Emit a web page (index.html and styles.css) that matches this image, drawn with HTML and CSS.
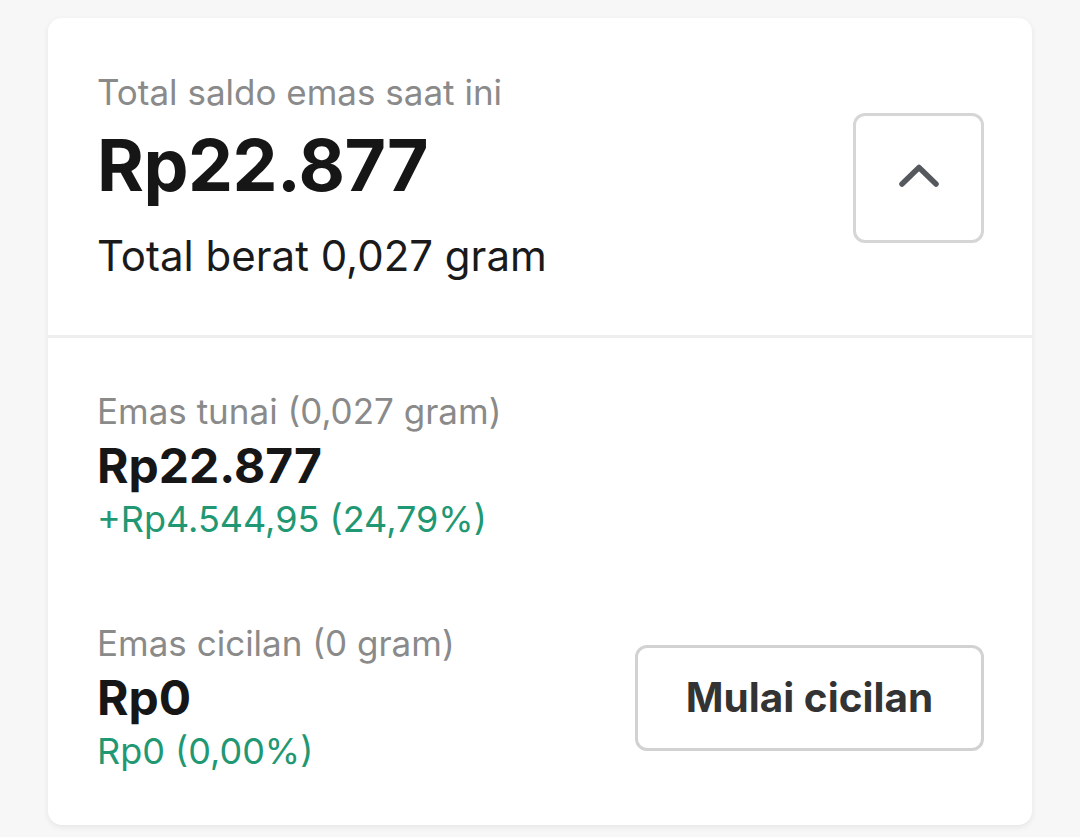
FILE: index.html
```html
<!DOCTYPE html>
<html>
<head>
<meta charset="utf-8">
<link rel="stylesheet" href="styles.css">
</head>
<body>
<div class="card">
  <section class="summary">
    <div class="summary-text">
      <div class="label">Total saldo emas saat ini</div>
      <div class="total">Rp22.877</div>
      <div class="weight">Total berat 0,027 gram</div>
    </div>
    <button class="toggle" aria-label="Tutup">
      <svg width="44" height="28" viewBox="0 0 44 28"><path d="M5 22 L22 5.5 L39 22" fill="none" stroke="#55585c" stroke-width="5.5" stroke-linecap="round" stroke-linejoin="round"/></svg>
    </button>
  </section>
  <section class="details">
    <div class="row first">
      <div class="item">
        <div class="label small">Emas tunai (0,027 gram)</div>
        <div class="amount">Rp22.877</div>
        <div class="gain">+Rp4.544,95 (24,79%)</div>
      </div>
    </div>
    <div class="row">
      <div class="item">
        <div class="label small">Emas cicilan (0 gram)</div>
        <div class="amount">Rp0</div>
        <div class="gain">Rp0 (0,00%)</div>
      </div>
      <button class="action">Mulai cicilan</button>
    </div>
  </section>
</div>
</body>
</html>
```
FILE: styles.css
```css
html, body {
  margin: 0;
  padding: 0;
  background: #f7f7f7;
  font-family: Inter, "Noto Sans", sans-serif;
}
body {
  padding: 18px 48px 12px 48px;
}
.card {
  background: #ffffff;
  border-radius: 14px;
  box-shadow: 0 2px 6px rgba(0,0,0,0.08);
  width: 984px;
  height: 807px;
  box-sizing: border-box;
  overflow: hidden;
}
.summary {
  display: flex;
  justify-content: space-between;
  align-items: flex-start;
  padding: 53px 48px 54px 49px;
  border-bottom: 3px solid #eeeeee;
}
.label {
  color: #8a8a8a;
  font-size: 35px;
  line-height: 42px;
}
.total {
  font-size: 71.5px;
  font-weight: 700;
  color: #161616;
  line-height: 80px;
  margin-top: 12px;
  letter-spacing: -0.5px;
}
.weight {
  font-size: 42px;
  color: #1a1a1a;
  line-height: 50px;
  margin-top: 26px;
}
.toggle {
  width: 131px;
  height: 130px;
  margin-top: 42px;
  border: 3px solid #d6d6d6;
  border-radius: 12px;
  background: #ffffff;
  display: flex;
  align-items: center;
  justify-content: center;
  padding: 0 0 4px 0;
}
.details {
  padding: 52px 48px 0 49px;
}
.row {
  display: flex;
  justify-content: space-between;
  align-items: center;
}
.row.first {
  margin-bottom: 81px;
}
.amount {
  font-size: 48px;
  font-weight: 700;
  color: #161616;
  line-height: 56px;
  margin-top: 6px;
}
.gain {
  font-size: 36px;
  color: #1f9873;
  line-height: 44px;
  margin-top: 3px;
}
.action {
  width: 349px;
  height: 106px;
  border: 3px solid #d2d2d2;
  border-radius: 12px;
  background: #ffffff;
  font-family: Inter, "Noto Sans", sans-serif;
  font-size: 40.5px;
  font-weight: 700;
  color: #333333;
  padding: 0;
}
```
